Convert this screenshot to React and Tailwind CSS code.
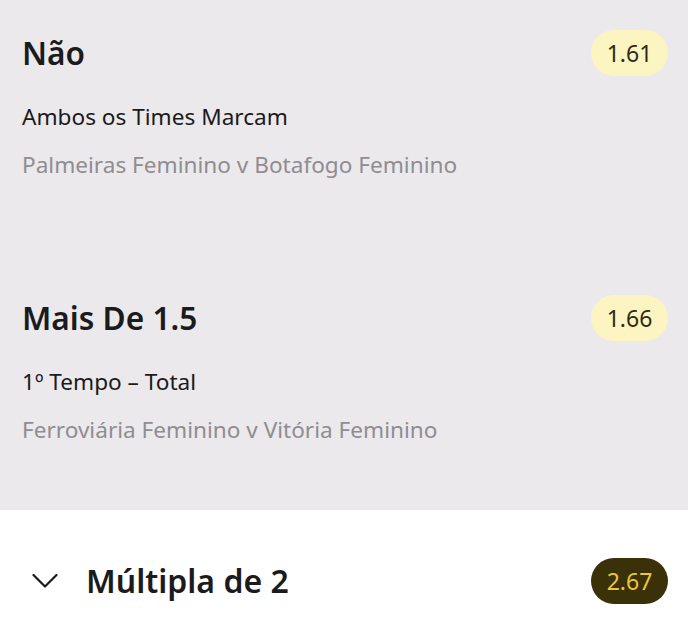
import React from "react";

function Pill({ value, dark }) {
  return (
    <div
      className={
        "flex h-[46px] w-[77px] items-center justify-center rounded-full text-[23px] leading-none " +
        (dark ? "bg-[#3a3108] text-[#e8c73c]" : "bg-[#fcf5c1] text-[#2f2a14]")
      }
    >
      {value}
    </div>
  );
}

function Selection({ title, odds, market, match }) {
  return (
    <div className="flex flex-col">
      <div className="flex h-[46px] items-center justify-between">
        <div className="text-[31.6px] font-semibold leading-[46px] text-[#1b1a1c]">{title}</div>
        <div className="mr-[20px]">
          <Pill value={odds} />
        </div>
      </div>
      <div className="mt-[25px] text-[22.6px] leading-[32px] text-[#1b1a1c]">{market}</div>
      <div className="mt-[16px] text-[22.6px] leading-[32px] text-[#8f8d91]">{match}</div>
    </div>
  );
}

export default function App() {
  return (
    <div
      className="flex h-[636px] w-[688px] flex-col overflow-hidden bg-white"
      style={{ fontFamily: '"Noto Sans", sans-serif' }}
    >
      <div className="flex h-[510px] flex-col gap-[114px] bg-[#ebe9ec] pl-[22px] pt-[30px]">
        <Selection
          title="Não"
          odds="1.61"
          market="Ambos os Times Marcam"
          match="Palmeiras Feminino v Botafogo Feminino"
        />
        <Selection
          title="Mais De 1.5"
          odds="1.66"
          market="1º Tempo – Total"
          match="Ferroviária Feminino v Vitória Feminino"
        />
      </div>
      <div className="mt-[48px] flex h-[46px] items-center justify-between pl-[32px] pr-[20px]">
        <div className="flex items-center">
          <svg width="26" height="16" viewBox="0 0 26 16" fill="none">
            <polyline
              points="1.5,2 13,13.5 24.5,2"
              stroke="#1b1a1c"
              strokeWidth="2.2"
              strokeLinecap="round"
              strokeLinejoin="round"
            />
          </svg>
          <div className="ml-[28px] text-[32px] font-semibold leading-[46px] text-[#1b1a1c]">
            Múltipla de 2
          </div>
        </div>
        <Pill value="2.67" dark />
      </div>
    </div>
  );
}
